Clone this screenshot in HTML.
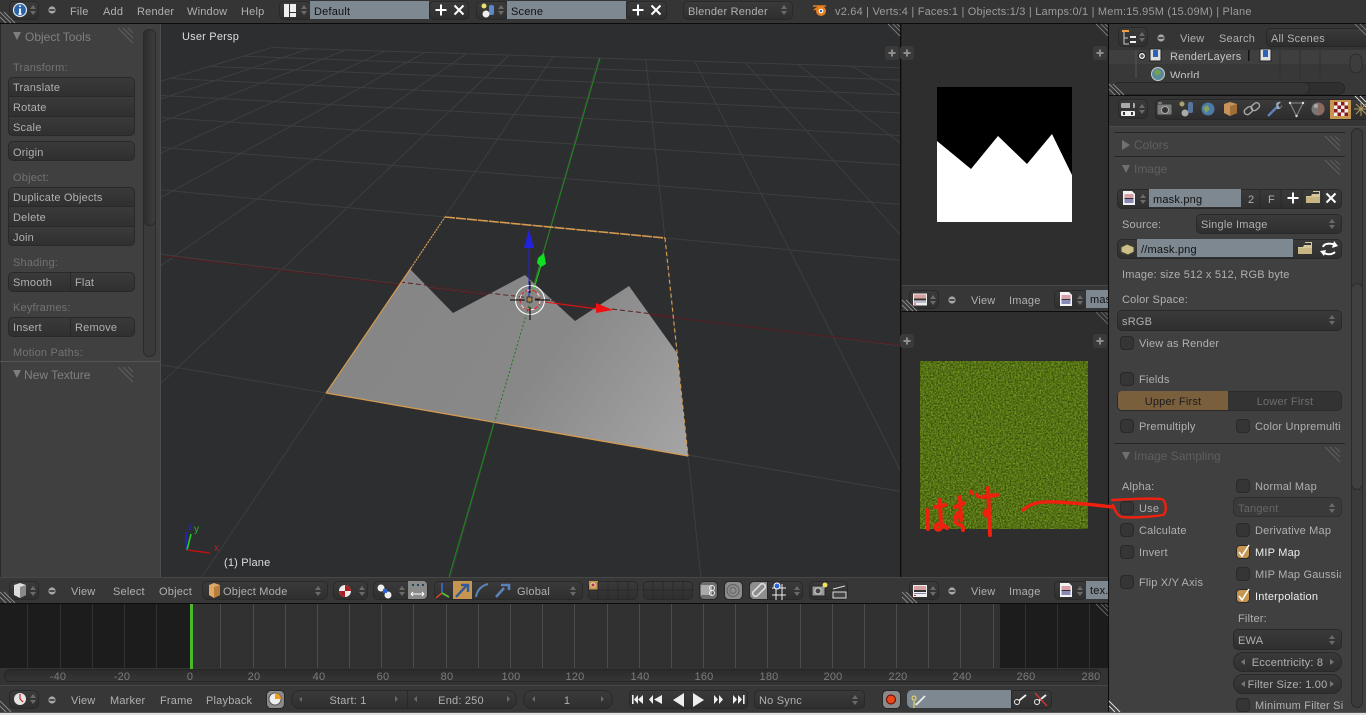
<!DOCTYPE html>
<html><head><meta charset="utf-8"><style>
html,body{margin:0;padding:0;background:#333;width:1366px;height:715px;overflow:hidden}
#r{position:relative;width:1366px;height:715px;overflow:hidden;background:#353535;font-family:"Liberation Sans",sans-serif;font-size:11px}
.b{position:absolute;box-sizing:border-box}
.t{position:absolute;white-space:nowrap;line-height:14px;font-size:11px;color:#b0b0b0;margin-top:1px;letter-spacing:.2px}
.l{color:#727272}
.h{font-size:12px;color:#808080;letter-spacing:0;margin-top:0}
.hd{color:#5f5f5f;font-size:12px;letter-spacing:0;margin-top:0}
.d{color:#666}
.w{position:absolute;box-sizing:border-box;background:linear-gradient(#3a3a3a,#2f2f2f);border:1px solid #292929;border-radius:5px}
.s{position:absolute;box-sizing:border-box;background:linear-gradient(#3a3a3a,#303030);border:1px solid #292929}
.f{position:absolute;box-sizing:border-box;background:#7e8890}
.c{position:absolute;box-sizing:border-box;width:14px;height:14px;background:#353535;border:1px solid #292929;border-radius:4px}
.ce{text-align:center}
svg{position:absolute;left:0;top:0}
</style></head><body><div id="r">

<!-- areas -->
<div class="b" style="left:0;top:0;width:1366px;height:23px;background:#353535"></div>
<div class="b" style="left:0;top:23px;width:1366px;height:1px;background:#0c0c0c"></div>
<div class="b" style="left:0;top:24px;width:160px;height:553px;background:#404040"></div>
<div class="b" style="left:0;top:24px;width:1px;height:553px;background:#2a2a2a"></div>
<div class="b" style="left:160px;top:24px;width:1px;height:553px;background:#4e4e4e"></div>
<div class="b" style="left:0;top:361px;width:160px;height:1px;background:#555"></div>
<div class="b" style="left:161px;top:24px;width:739px;height:553px;background:#2d2e30"></div>
<div class="b" style="left:900px;top:24px;width:1px;height:553px;background:#0c0c0c"></div>
<div class="b" style="left:901px;top:24px;width:1px;height:553px;background:#222"></div>
<div class="b" style="left:902px;top:24px;width:206px;height:261px;background:#2e2e2e"></div>
<div class="b" style="left:902px;top:285px;width:206px;height:27px;background:#373737;border-top:1px solid #474747"></div>
<div class="b" style="left:902px;top:311px;width:206px;height:1px;background:#0c0c0c"></div>
<div class="b" style="left:902px;top:312px;width:206px;height:265px;background:#2e2e2e"></div>
<div class="b" style="left:0;top:577px;width:1108px;height:26px;background:#373737;border-top:1px solid #474747"></div>
<div class="b" style="left:0;top:603px;width:1108px;height:1px;background:#0c0c0c"></div>
<div class="b" style="left:0;top:604px;width:1108px;height:64px;background:#313131"></div>
<div class="b" style="left:0;top:604px;width:190px;height:64px;background:#1c1c1c"></div>
<div class="b" style="left:1000px;top:604px;width:108px;height:64px;background:#1c1c1c"></div>
<div class="b" style="left:0;top:668px;width:1108px;height:17px;background:#333"></div>
<div class="b" style="left:4px;top:669px;width:1097px;height:13px;background:linear-gradient(#2b2b2b,#353535);border:1px solid #262626;border-radius:7px"></div>
<div class="b" style="left:0;top:685px;width:1108px;height:27px;background:#373737;border-top:1px solid #474747"></div>
<div class="b" style="left:1108px;top:24px;width:1px;height:688px;background:#0c0c0c"></div>
<div class="b" style="left:1109px;top:24px;width:257px;height:26px;background:#353535"></div>
<div class="b" style="left:1109px;top:50px;width:257px;height:14px;background:#3f3f3f"></div>
<div class="b" style="left:1109px;top:64px;width:257px;height:31px;background:#383838"></div>
<div class="b" style="left:1113px;top:82px;width:232px;height:13px;background:#2f2f2f;border:1px solid #262626;border-radius:7px"></div>
<div class="b" style="left:1113px;top:82px;width:197px;height:13px;background:#353535;border:1px solid #262626;border-radius:7px"></div>
<div class="b" style="left:1109px;top:95px;width:257px;height:1px;background:#0c0c0c"></div>
<div class="b" style="left:1109px;top:96px;width:257px;height:30px;background:#353535"></div>
<div class="b" style="left:1109px;top:126px;width:257px;height:586px;background:#404040;border-top:1px solid #4a4a4a"></div>
<div class="b" style="left:1114px;top:132px;width:231px;height:1px;background:#262626"></div>
<div class="b" style="left:1114px;top:156px;width:231px;height:1px;background:#262626"></div>
<div class="b" style="left:1114px;top:443px;width:231px;height:1px;background:#262626"></div>
<div class="b" style="left:1351px;top:128px;width:12px;height:580px;background:#3a3a3a;border:1px solid #2b2b2b;border-radius:6px"></div>
<div class="b" style="left:1351px;top:283px;width:12px;height:207px;background:#404040;border:1px solid #2b2b2b;border-radius:6px"></div>
<div class="b" style="left:0;top:712px;width:1366px;height:3px;background:#dfe3e6;border-top:1px solid #555"></div>
<div class="b" style="left:143px;top:29px;width:13px;height:328px;background:#3a3a3a;border:1px solid #2b2b2b;border-radius:6px"></div>
<div class="b" style="left:143px;top:29px;width:13px;height:197px;background:linear-gradient(90deg,#2d2d2d,#3d3d3d);border:1px solid #2b2b2b;border-radius:6px"></div>

<!-- images -->
<svg width="1366" height="715" viewBox="0 0 1366 715">
<defs>
<clipPath id="vp"><rect x="161" y="24" width="739" height="553"/></clipPath>
<filter id="gr" x="0" y="0" width="100%" height="100%" color-interpolation-filters="sRGB"><feTurbulence type="fractalNoise" baseFrequency="0.6" numOctaves="2" seed="4"/><feColorMatrix values=".5 0 0 0 .08  .55 0 0 0 .17  .16 0 0 0 0  0 0 0 0 1"/></filter>
<linearGradient id="pg" gradientUnits="userSpaceOnUse" x1="400" y1="260" x2="690" y2="460"><stop offset="0" stop-color="#868686"/><stop offset=".5" stop-color="#888"/><stop offset="1" stop-color="#a6a6a6"/></linearGradient>
</defs>
<g id="grid" clip-path="url(#vp)" stroke="#3e3e3e" stroke-width="1" fill="none"></g>
<g clip-path="url(#vp)">
<path d="M163 256L900 345" stroke="#561a1e" stroke-width="1" fill="none"/>
<path d="M600 58L449 577" stroke="#1e8a1e" stroke-width="1" fill="none"/>
<polygon points="326,393 410,269 453,313 525,275 575,321 629,286 677,353 688,456" fill="url(#pg)"/>
<path d="M400 282L595 306M612 309L677 317" stroke="#5a2024" stroke-width="1" stroke-dasharray="5 3" fill="none"/>
<path d="M530 302L449 577" stroke="#1c7a1c" stroke-width="1" stroke-dasharray="2 2" fill="none"/>
<path d="M445 217L665 238" stroke="#d49a50" stroke-width="1.6" stroke-dasharray="10 1" fill="none"/>
<path d="M665 238L688 456" stroke="#d49a50" stroke-width="1.2" stroke-dasharray="4 3" fill="none"/>
<path d="M688 456L326 393" stroke="#d49a50" stroke-width="1.3" fill="none"/>
<path d="M326 393L411 268" stroke="#d49a50" stroke-width="1.2" fill="none"/>
<path d="M411 268L445 217" stroke="#d49a50" stroke-width="1.2" stroke-dasharray="2 1" fill="none"/>
<path d="M529 248V300" stroke="#2222cc" stroke-width="1"/>
<polygon points="529,229 534,248 524,248" fill="#2222dd"/>
<path d="M533 292L541 265" stroke="#22cc22" stroke-width="1"/>
<polygon points="544,253 546,264 541,267 537,263 538,258" fill="#11dd22"/>
<path d="M545 302L597 309" stroke="#ee1111" stroke-width="1"/>
<polygon points="613,310 596,303 596,313" fill="#ee1111"/>
<circle cx="530" cy="300" r="14.5" fill="none" stroke="#fff" stroke-width="1.1"/>
<circle cx="530" cy="300" r="10" fill="none" stroke="#e22" stroke-width="1.1" stroke-dasharray="5 2"/>
<circle cx="530" cy="300" r="10" fill="none" stroke="#fff" stroke-width="1.1" stroke-dasharray="4 7" opacity=".8"/>
<path d="M510 300H525M535 300H550M530 281V293M530 307V320" stroke="#000" stroke-width="1"/>
<rect x="527" y="297" width="5" height="5" fill="#a8854a" stroke="#222" stroke-width=".8"/>
<path d="M186 550V532" stroke="#2222cc" stroke-width="1.6"/>
<path d="M187 550L191 534" stroke="#22cc22" stroke-width="1.6"/>
<path d="M187 550L210 553" stroke="#bb1111" stroke-width="1.6"/>
</g>
<!-- mask -->
<rect x="937" y="87" width="135" height="135" fill="#000"/>
<polygon points="937,141 971,169 998,136 1027,164 1052,134 1072,175 1072,222 937,222" fill="#fff"/>
<!-- grass -->
<rect x="920" y="361" width="168" height="168" fill="#4f7a1c"/>
<rect x="920" y="361" width="168" height="168" filter="url(#gr)"/>
</svg>

<!-- TOP HEADER -->
<div class="w" style="left:9px;top:1px;width:30px;height:19px"></div>
<span class="t" style="left:70px;top:4px">File</span>
<span class="t" style="left:103px;top:4px">Add</span>
<span class="t" style="left:137px;top:4px">Render</span>
<span class="t" style="left:187px;top:4px">Window</span>
<span class="t" style="left:241px;top:4px">Help</span>
<div class="w" style="left:279px;top:1px;width:32px;height:19px"></div>
<div class="f" style="left:310px;top:1px;width:119px;height:18px"></div>
<span class="t" style="left:314px;top:4px;color:#111">Default</span>
<div class="w" style="left:429px;top:1px;width:40px;height:19px"></div>
<div class="w" style="left:476px;top:1px;width:32px;height:19px"></div>
<div class="f" style="left:507px;top:1px;width:119px;height:18px"></div>
<span class="t" style="left:511px;top:4px;color:#111">Scene</span>
<div class="w" style="left:626px;top:1px;width:41px;height:19px"></div>
<div class="w" style="left:683px;top:1px;width:110px;height:19px"></div>
<span class="t" style="left:688px;top:4px">Blender Render</span>
<span class="t" style="left:835px;top:4px;color:#9c9c9c">v2.64 | Verts:4 | Faces:1 | Objects:1/3 | Lamps:0/1 | Mem:15.95M (15.09M) | Plane</span>

<!-- LEFT PANEL -->
<span class="t h" style="left:25px;top:30px">Object Tools</span>
<span class="t l" style="left:13px;top:60px">Transform:</span>
<div class="s" style="left:8px;top:77px;width:127px;height:20px;border-radius:5px 5px 0 0"></div>
<div class="s" style="left:8px;top:96px;width:127px;height:21px"></div>
<div class="s" style="left:8px;top:116px;width:127px;height:20px;border-radius:0 0 5px 5px"></div>
<span class="t" style="left:13px;top:80px">Translate</span>
<span class="t" style="left:13px;top:100px">Rotate</span>
<span class="t" style="left:13px;top:120px">Scale</span>
<div class="w" style="left:8px;top:141px;width:127px;height:20px"></div>
<span class="t" style="left:13px;top:145px">Origin</span>
<span class="t l" style="left:13px;top:170px">Object:</span>
<div class="s" style="left:8px;top:187px;width:127px;height:20px;border-radius:5px 5px 0 0"></div>
<div class="s" style="left:8px;top:206px;width:127px;height:21px"></div>
<div class="s" style="left:8px;top:226px;width:127px;height:20px;border-radius:0 0 5px 5px"></div>
<span class="t" style="left:13px;top:190px">Duplicate Objects</span>
<span class="t" style="left:13px;top:210px">Delete</span>
<span class="t" style="left:13px;top:230px">Join</span>
<span class="t l" style="left:13px;top:255px">Shading:</span>
<div class="s" style="left:8px;top:272px;width:63px;height:20px;border-radius:5px 0 0 5px"></div>
<div class="s" style="left:70px;top:272px;width:65px;height:20px;border-radius:0 5px 5px 0"></div>
<span class="t" style="left:13px;top:275px">Smooth</span>
<span class="t" style="left:75px;top:275px">Flat</span>
<span class="t l" style="left:13px;top:300px">Keyframes:</span>
<div class="s" style="left:8px;top:317px;width:63px;height:20px;border-radius:5px 0 0 5px"></div>
<div class="s" style="left:70px;top:317px;width:65px;height:20px;border-radius:0 5px 5px 0"></div>
<span class="t" style="left:13px;top:320px">Insert</span>
<span class="t" style="left:75px;top:320px">Remove</span>
<span class="t l" style="left:13px;top:345px">Motion Paths:</span>
<span class="t h" style="left:24px;top:368px">New Texture</span>

<!-- VIEWPORT TEXT -->
<span class="t" style="left:182px;top:29px;color:#ddd">User Persp</span>
<span class="t" style="left:224px;top:555px;color:#ddd">(1) Plane</span>
<span class="t" style="left:188px;top:520px;color:#2222cc;font-size:10px">z</span>
<span class="t" style="left:194px;top:522px;color:#22bb22;font-size:10px">y</span>
<span class="t" style="left:214px;top:541px;color:#bb2222;font-size:10px">x</span>

<!-- IMAGE EDITOR HEADERS -->
<div class="w" style="left:909px;top:290px;width:30px;height:19px"></div>
<span class="t" style="left:971px;top:293px">View</span>
<span class="t" style="left:1009px;top:293px">Image</span>
<div class="w" style="left:1054px;top:290px;width:33px;height:19px"></div>
<div class="f" style="left:1086px;top:290px;width:22px;height:18px;overflow:hidden"><span class="t" style="left:4px;top:2px;color:#111">mask.png</span></div>
<div class="w" style="left:909px;top:581px;width:30px;height:19px"></div>
<span class="t" style="left:971px;top:584px">View</span>
<span class="t" style="left:1009px;top:584px">Image</span>
<div class="w" style="left:1054px;top:581px;width:33px;height:19px"></div>
<div class="f" style="left:1086px;top:581px;width:22px;height:18px;overflow:hidden"><span class="t" style="left:4px;top:2px;color:#111">tex.png</span></div>

<!-- VIEWPORT HEADER -->
<div class="w" style="left:9px;top:581px;width:30px;height:19px"></div>
<span class="t" style="left:71px;top:584px">View</span>
<span class="t" style="left:113px;top:584px">Select</span>
<span class="t" style="left:159px;top:584px">Object</span>
<div class="w" style="left:202px;top:581px;width:126px;height:19px"></div>
<span class="t" style="left:223px;top:584px">Object Mode</span>
<div class="w" style="left:333px;top:581px;width:35px;height:19px"></div>
<div class="w" style="left:373px;top:581px;width:55px;height:19px"></div>
<div class="b" style="left:408px;top:581px;width:19px;height:18px;background:#8a8a8a;border-radius:0 4px 4px 0"></div>
<div class="w" style="left:434px;top:581px;width:149px;height:19px"></div>
<div class="b" style="left:453px;top:581px;width:19px;height:18px;background:#c6954f"></div>
<span class="t" style="left:517px;top:584px">Global</span>
<div class="w" style="left:588px;top:581px;width:50px;height:19px"></div>
<div class="w" style="left:643px;top:581px;width:50px;height:19px"></div>
<div class="b" style="left:589px;top:581px;width:9px;height:9px;background:#c6954f"></div>
<div class="b" style="left:699px;top:581px;width:19px;height:19px;background:#6d6d6d;border:1px solid #262626;border-radius:5px"></div>
<div class="b" style="left:724px;top:581px;width:19px;height:19px;background:#8d8d8d;border:1px solid #262626;border-radius:5px"></div>
<div class="w" style="left:749px;top:581px;width:54px;height:19px"></div>
<div class="b" style="left:749px;top:581px;width:19px;height:19px;background:#8d8d8d;border:1px solid #262626;border-radius:5px 0 0 5px"></div>
<div class="w" style="left:809px;top:581px;width:39px;height:19px"></div>

<!-- TIMELINE LABELS -->
<span class="t ce" style="left:38px;top:669px;width:40px;color:#7c7c7c">-40</span>
<span class="t ce" style="left:102px;top:669px;width:40px;color:#7c7c7c">-20</span>
<span class="t ce" style="left:170px;top:669px;width:40px;color:#7c7c7c">0</span>
<span class="t ce" style="left:234px;top:669px;width:40px;color:#7c7c7c">20</span>
<span class="t ce" style="left:299px;top:669px;width:40px;color:#7c7c7c">40</span>
<span class="t ce" style="left:363px;top:669px;width:40px;color:#7c7c7c">60</span>
<span class="t ce" style="left:427px;top:669px;width:40px;color:#7c7c7c">80</span>
<span class="t ce" style="left:491px;top:669px;width:40px;color:#7c7c7c">100</span>
<span class="t ce" style="left:555px;top:669px;width:40px;color:#7c7c7c">120</span>
<span class="t ce" style="left:620px;top:669px;width:40px;color:#7c7c7c">140</span>
<span class="t ce" style="left:684px;top:669px;width:40px;color:#7c7c7c">160</span>
<span class="t ce" style="left:749px;top:669px;width:40px;color:#7c7c7c">180</span>
<span class="t ce" style="left:813px;top:669px;width:40px;color:#7c7c7c">200</span>
<span class="t ce" style="left:878px;top:669px;width:40px;color:#7c7c7c">220</span>
<span class="t ce" style="left:942px;top:669px;width:40px;color:#7c7c7c">240</span>
<span class="t ce" style="left:1006px;top:669px;width:40px;color:#7c7c7c">260</span>
<span class="t ce" style="left:1071px;top:669px;width:40px;color:#7c7c7c">280</span>

<!-- BOTTOM HEADER -->
<div class="w" style="left:9px;top:690px;width:30px;height:19px"></div>
<span class="t" style="left:71px;top:693px">View</span>
<span class="t" style="left:110px;top:693px">Marker</span>
<span class="t" style="left:160px;top:693px">Frame</span>
<span class="t" style="left:206px;top:693px">Playback</span>
<div class="b" style="left:266px;top:690px;width:19px;height:19px;background:#8a8a8a;border:1px solid #262626;border-radius:5px"></div>
<div class="w" style="left:291px;top:690px;width:117px;height:19px;border-radius:9px 0 0 9px"></div>
<div class="w" style="left:407px;top:690px;width:110px;height:19px;border-radius:0 9px 9px 0"></div>
<span class="t ce" style="left:300px;top:693px;width:96px">Start: 1</span>
<span class="t ce" style="left:413px;top:693px;width:96px">End: 250</span>
<div class="w" style="left:523px;top:690px;width:90px;height:19px;border-radius:9px"></div>
<span class="t ce" style="left:530px;top:693px;width:74px">1</span>
<div class="w" style="left:629px;top:690px;width:119px;height:19px"></div>
<div class="w" style="left:754px;top:690px;width:111px;height:19px"></div>
<span class="t" style="left:759px;top:693px">No Sync</span>
<div class="b" style="left:882px;top:690px;width:19px;height:19px;background:#8a8a8a;border:1px solid #262626;border-radius:5px"></div>
<div class="f" style="left:907px;top:690px;width:104px;height:18px;border-radius:5px 0 0 5px"></div>
<div class="w" style="left:1011px;top:690px;width:41px;height:19px;border-radius:0 5px 5px 0"></div>

<!-- OUTLINER -->
<div class="w" style="left:1118px;top:27px;width:30px;height:20px"></div>
<span class="t" style="left:1180px;top:31px">View</span>
<span class="t" style="left:1219px;top:31px">Search</span>
<div class="b" style="left:1266px;top:28px;width:100px;height:19px;background:linear-gradient(#3a3a3a,#2d2d2d);border:1px solid #272727;border-right:0;border-radius:5px 0 0 5px"></div>
<span class="t" style="left:1271px;top:31px">All Scenes</span>
<span class="t" style="left:1170px;top:49px;color:#c4c4c4">RenderLayers</span>
<div class="b" style="left:1109px;top:64px;width:257px;height:14px;overflow:hidden"><span class="t" style="left:61px;top:4px;color:#c4c4c4">World</span></div>

<!-- PROPERTIES HEADER -->
<div class="w" style="left:1118px;top:99px;width:30px;height:20px"></div>
<div class="b" style="left:1155px;top:99px;width:211px;height:21px;background:linear-gradient(#3a3a3a,#2d2d2d);border:1px solid #272727;border-right:0;border-radius:5px 0 0 5px"></div>
<div class="b" style="left:1330px;top:100px;width:21px;height:19px;background:#c6954f"></div>

<!-- PROPERTIES -->
<span class="t hd" style="left:1134px;top:138px">Colors</span>
<span class="t hd" style="left:1134px;top:162px">Image</span>
<div class="w" style="left:1117px;top:189px;width:225px;height:20px"></div>
<div class="f" style="left:1149px;top:189px;width:92px;height:18px"></div>
<span class="t" style="left:1153px;top:192px;color:#111">mask.png</span>
<span class="t" style="left:1248px;top:192px">2</span>
<span class="t" style="left:1268px;top:192px">F</span>
<span class="t" style="left:1122px;top:217px">Source:</span>
<div class="w" style="left:1196px;top:214px;width:146px;height:20px"></div>
<span class="t" style="left:1201px;top:217px">Single Image</span>
<div class="w" style="left:1117px;top:239px;width:225px;height:20px"></div>
<div class="f" style="left:1137px;top:239px;width:156px;height:18px"></div>
<span class="t" style="left:1141px;top:242px;color:#111">//mask.png</span>
<span class="t" style="left:1122px;top:267px">Image: size 512 x 512, RGB byte</span>
<span class="t" style="left:1122px;top:292px">Color Space:</span>
<div class="w" style="left:1117px;top:310px;width:225px;height:21px"></div>
<span class="t" style="left:1122px;top:314px">sRGB</span>
<div class="c" style="left:1120px;top:336px"></div>
<span class="t" style="left:1139px;top:336px">View as Render</span>
<div class="c" style="left:1120px;top:372px"></div>
<span class="t" style="left:1139px;top:372px">Fields</span>
<div class="b" style="left:1117px;top:391px;width:225px;height:20px;background:#333;border:1px solid #2b2b2b;border-radius:5px"></div>
<div class="b" style="left:1118px;top:391px;width:110px;height:19px;background:#7a5f3c;border-radius:4px 0 0 4px"></div>
<span class="t ce" style="left:1118px;top:394px;width:110px;color:#1c1c1c">Upper First</span>
<span class="t ce" style="left:1230px;top:394px;width:110px;color:#6e6e6e">Lower First</span>
<div class="c" style="left:1120px;top:419px"></div>
<span class="t" style="left:1139px;top:419px">Premultiply</span>
<div class="c" style="left:1236px;top:419px"></div>
<span class="t" style="left:1255px;top:419px;width:85px;overflow:hidden">Color Unpremultiply</span>
<span class="t hd" style="left:1134px;top:449px">Image Sampling</span>
<span class="t" style="left:1122px;top:479px">Alpha:</span>
<div class="c" style="left:1120px;top:501px"></div>
<span class="t" style="left:1139px;top:501px">Use</span>
<div class="c" style="left:1120px;top:523px"></div>
<span class="t" style="left:1139px;top:523px">Calculate</span>
<div class="c" style="left:1120px;top:545px"></div>
<span class="t" style="left:1139px;top:545px">Invert</span>
<div class="c" style="left:1120px;top:575px"></div>
<span class="t" style="left:1139px;top:575px">Flip X/Y Axis</span>
<div class="c" style="left:1236px;top:479px"></div>
<span class="t" style="left:1255px;top:479px">Normal Map</span>
<div class="b" style="left:1233px;top:497px;width:109px;height:20px;background:#3a3a3a;border:1px solid #303030;border-radius:5px"></div>
<span class="t d" style="left:1238px;top:501px">Tangent</span>
<div class="c" style="left:1236px;top:523px"></div>
<span class="t" style="left:1255px;top:523px">Derivative Map</span>
<div class="c" style="left:1236px;top:545px;background:#c6954f"></div>
<span class="t" style="left:1255px;top:545px;color:#eee">MIP Map</span>
<div class="c" style="left:1236px;top:567px"></div>
<span class="t" style="left:1255px;top:567px;width:86px;overflow:hidden">MIP Map Gaussian</span>
<div class="c" style="left:1236px;top:589px;background:#c6954f"></div>
<span class="t" style="left:1255px;top:589px;color:#eee">Interpolation</span>
<span class="t" style="left:1238px;top:611px">Filter:</span>
<div class="w" style="left:1233px;top:629px;width:109px;height:21px"></div>
<span class="t" style="left:1238px;top:633px">EWA</span>
<div class="w" style="left:1233px;top:652px;width:109px;height:20px;border-radius:10px"></div>
<span class="t ce" style="left:1233px;top:655px;width:109px">Eccentricity: 8</span>
<div class="w" style="left:1233px;top:674px;width:109px;height:20px;border-radius:10px"></div>
<span class="t ce" style="left:1233px;top:677px;width:109px">Filter Size: 1.00</span>
<div class="c" style="left:1236px;top:698px"></div>
<span class="t" style="left:1255px;top:698px;width:88px;overflow:hidden">Minimum Filter Size</span>

<!-- ICON OVERLAY -->
<svg width="1366" height="715" viewBox="0 0 1366 715">
<defs>
<g id="ud"><polygon points="-3,-1 0,-5 3,-1" fill="#6a6a6a"/><polygon points="-3,1 0,5 3,1" fill="#6a6a6a"/></g>
<g id="mn"><circle r="3.6" fill="#a8a8a8"/><rect x="-2.6" y="-.8" width="5.2" height="1.6" fill="#333"/></g>
<g id="ht" stroke="#5e5e5e" stroke-width="1" fill="none"><path d="M0 0L15 15M5 0L15 10M10 0L15 5"/></g>
<g id="pl"><rect x="-7" y="-7" width="14" height="14" rx="3" fill="#3a3a3a"/><path d="M-3.5 0H3.5M0 -3.5V3.5" stroke="#8e8e8e" stroke-width="2"/></g>
<g id="ie"><rect x="-7" y="-6" width="14" height="12" fill="#eee"/><rect x="-6" y="-5" width="12" height="4" fill="#d9a0a0"/><rect x="-6" y="-1" width="12" height="2" fill="#333"/><rect x="-6" y="2" width="12" height="1" fill="#8a8ab0"/><rect x="-6" y="4" width="2" height="1" fill="#d22"/></g>
<g id="di"><path d="M-6 -7H3L6 -4V7H-6Z" fill="#f2f2f2"/><rect x="-4.5" y="-4" width="9" height="4" fill="#d8a0a8"/><rect x="-4.5" y="0" width="9" height="1" fill="#333"/><rect x="-4.5" y="1" width="9" height="4" fill="#8a8ab8"/></g>
<g id="fo"><path d="M-7 -2H-2L-1 -4H6V-6H0V-7H7V5H-7Z" fill="#d6c89a"/><rect x="-7" y="-1" width="14" height="6" fill="#c8b682"/></g>
<g id="xx"><path d="M-4.5 -4.5L4.5 4.5M4.5 -4.5L-4.5 4.5" stroke="#fff" stroke-width="2"/></g>
<g id="pp"><path d="M-5.5 0H5.5M0 -5.5V5.5" stroke="#fff" stroke-width="2"/></g>
</defs>

<!-- hatches -->
<use href="#ht" x="118" y="28"/><use href="#ht" x="118" y="367"/>
<use href="#ht" x="1325" y="136"/><use href="#ht" x="1325" y="160"/><use href="#ht" x="1325" y="447"/>
<path d="M0 12L11 23M0 17L6 23M4 12L15 23" stroke="#8a8a8a"/>
<path d="M888 24L900 36M893 24L900 31M897 24L900 27" stroke="#777"/>
<path d="M1096 24L1108 36M1101 24L1108 31M1105 24L1108 27" stroke="#777"/>
<path d="M1096 312L1108 324M1101 312L1108 319M1105 312L1108 315" stroke="#666"/>
<path d="M1096 604L1108 616M1101 604L1108 611M1105 604L1108 607" stroke="#666"/>
<path d="M0 300L11 311M0 305L6 311M4 300L15 311" transform="translate(902 0)" stroke="#8a8a8a"/>
<path d="M0 592L11 603M0 597L6 603M4 592L15 603" stroke="#8a8a8a"/>
<path d="M0 592L11 603M0 597L6 603M4 592L15 603" transform="translate(902 0)" stroke="#8a8a8a"/>
<path d="M0 701L11 712M0 706L6 712" stroke="#8a8a8a"/>
<path d="M1109 84L1120 95M1109 89L1115 95M1113 84L1124 95" stroke="#8a8a8a"/>
<path d="M1109 701L1120 712M1109 706L1115 712" stroke="#ddd"/>
<path d="M1355 24L1366 35M1360 24L1366 30" stroke="#777"/>
<path d="M1355 96L1366 107M1360 96L1366 102" stroke="#ddd"/>

<use href="#pl" x="892" y="53"/><use href="#pl" x="907" y="53"/><use href="#pl" x="1100" y="53"/><use href="#pl" x="907" y="341"/><use href="#pl" x="1100" y="341"/>

<!-- top header -->
<circle cx="20" cy="10" r="6.5" fill="#2a62a8" stroke="#dfe6ee" stroke-width="1.2"/><path d="M20 5.5V7M20 8.5V14M18.5 14H21.5" stroke="#fff" stroke-width="1.8"/>
<use href="#ud" x="33" y="10"/><use href="#mn" x="52" y="10"/>
<rect x="284" y="4" width="5" height="13" fill="#eee"/><rect x="290" y="4" width="6" height="8" fill="#eee"/><rect x="290" y="13" width="6" height="4" fill="#eee"/>
<use href="#ud" x="304" y="10"/>
<use href="#pp" x="441" y="10"/><use href="#xx" x="459" y="10"/>
<circle cx="484" cy="6" r="2.5" fill="#e8e070"/><rect x="489" y="5" width="5" height="10" rx="2" fill="#5a88c8"/><circle cx="486" cy="14" r="3.5" fill="#eee"/>
<use href="#ud" x="501" y="10"/>
<use href="#pp" x="638" y="10"/><use href="#xx" x="656" y="10"/>
<use href="#ud" x="784" y="10"/>
<path d="M814 10L820 6H813M820 6L826 6" stroke="#e88020" stroke-width="1.6" fill="none"/><circle cx="821" cy="11" r="5" fill="#e88020"/><circle cx="821" cy="11" r="2.3" fill="#fff"/><circle cx="821" cy="11" r="1.2" fill="#2a62a8"/>

<!-- image editor headers -->
<use href="#ie" x="920" y="299.500"/><use href="#ud" x="933" y="300"/><use href="#mn" x="952" y="300"/><use href="#di" x="1066" y="299"/><use href="#ud" x="1080" y="300"/>
<use href="#ie" x="920" y="591"/><use href="#ud" x="933" y="591"/><use href="#mn" x="952" y="591"/><use href="#di" x="1066" y="590"/><use href="#ud" x="1080" y="591"/>

<!-- viewport header -->
<path d="M14 585L20 583L26 585V595L20 598L14 595Z" fill="#ddd"/><path d="M20 587V598L26 595V585Z" fill="#888"/>
<use href="#ud" x="33" y="591"/><use href="#mn" x="52" y="591"/>
<path d="M209 585L214 583L220 585V595L214 598L209 595Z" fill="#e0a868"/><path d="M214 587V598L220 595V585Z" fill="#b87c3c"/>
<use href="#ud" x="318" y="591"/>
<circle cx="345" cy="591" r="6" fill="#eee"/><path d="M345 585A6 6 0 0 1 351 591H345ZM345 591V597A6 6 0 0 1 339 591Z" fill="#a82020"/>
<use href="#ud" x="362" y="591"/>
<circle cx="381" cy="588" r="3.5" fill="#eee"/><circle cx="388" cy="595" r="3.5" fill="#eee"/><rect x="383" y="589" width="4" height="4" fill="#2a62d8"/>
<use href="#ud" x="402" y="591"/>
<path d="M411 594H424M411 594L413 592M411 594L413 596M424 594L422 592M424 594L422 596" stroke="#fff" fill="none"/><path d="M412 584h2v2h-2zM417 584h2v2h-2zM422 584h2v2h-2z" fill="#245"/>
<path d="M442 593V583" stroke="#3a6ad0" stroke-width="1.6"/><path d="M442 593L436 598" stroke="#d04030" stroke-width="1.6"/><path d="M442 593L449 597" stroke="#60c030" stroke-width="1.6"/>
<path d="M456 597L467 585M461 585H468V592" stroke="#2f5a9c" stroke-width="2.4" fill="none"/>
<path d="M476 597C477 590 481 586 488 584" stroke="#5a82b8" stroke-width="2" fill="none"/>
<path d="M496 597L504 588M501 585H509V590" stroke="#5a82b8" stroke-width="2.6" fill="none"/>
<use href="#ud" x="573" y="591"/>
<path d="M598 582V599M608 582V599M618 582V599M628 582V599M589 590H637M653 582V599M663 582V599M673 582V599M683 582V599M644 590H692" stroke="#2a2a2a" fill="none"/>
<circle cx="593" cy="585" r="2" fill="#a33" stroke="#fff" stroke-width=".7"/>
<rect x="701" y="585" width="11" height="10" fill="#aaa"/><circle cx="712" cy="588" r="2.5" fill="none" stroke="#eee"/><circle cx="712" cy="593" r="2.5" fill="none" stroke="#eee"/>
<circle cx="733" cy="590.500" r="6" fill="none" stroke="#666" stroke-width="1.2"/><circle cx="733" cy="590.500" r="3" fill="none" stroke="#666"/>
<path d="M753 592L761 584A3 3 0 0 1 765 588L757 596A3 3 0 0 1 753 592Z" fill="none" stroke="#ddd" stroke-width="1.6"/>
<path d="M772 588H786M772 595H786M776 584V600M782 584V600" stroke="#eee"/><circle cx="777" cy="586" r="3" fill="#2a62d8" stroke="#fff"/>
<use href="#ud" x="797" y="591"/>
<rect x="812" y="586" width="13" height="10" fill="#999" stroke="#222"/><circle cx="818" cy="591" r="3" fill="#444" stroke="#ccc"/><circle cx="825" cy="585" r="2.500" fill="#f0e060"/>
<path d="M833 589L845 586M833 592H846V598H833Z" fill="#444" stroke="#ddd"/>

<!-- timeline -->
<g id="ticks" stroke="#4c4c4c" stroke-width="1"></g>
<rect x="190" y="604" width="3" height="65" fill="#4ab828"/>

<!-- bottom header -->
<circle cx="20" cy="699" r="6" fill="#e4e4e4"/><path d="M20 699V694M20 699L23 702" stroke="#c22" stroke-width="1.2"/>
<use href="#ud" x="33" y="699"/><use href="#mn" x="52" y="700"/>
<circle cx="275" cy="699" r="6" fill="#eee" stroke="#555"/><path d="M275 699V693A6 6 0 0 1 281 699Z" fill="#f09a20"/>
<polygon points="302,697 299,699 302,702" fill="#6a6a6a"/><polygon points="395,696 398,699 395,702" fill="#6a6a6a"/>
<polygon points="417,696 414,699 417,702" fill="#6a6a6a"/><polygon points="507,696 510,699 507,702" fill="#6a6a6a"/>
<polygon points="535,696 532,699 535,702" fill="#6a6a6a"/><polygon points="601,696 604,699 601,702" fill="#6a6a6a"/>
<g fill="#eee">
<rect x="632" y="695" width="1.600" height="9"/><polygon points="638,695 634,699.500 638,704"/><polygon points="643,695 638,699.500 643,704"/>
<polygon points="653,695 649,699.500 653,704"/><polygon points="662,695 654,699.500 662,704"/>
<polygon points="684,693 673,700 684,707"/>
<polygon points="693,693 704,700 693,707"/>
<polygon points="714,695 718,699.500 714,704"/><polygon points="719,695 723,699.500 719,704"/>
<polygon points="733,695 737,699.500 733,704"/><polygon points="738,695 742,699.500 738,704"/><rect x="743" y="695" width="1.600" height="9"/>
</g>
<use href="#ud" x="855" y="700"/>
<circle cx="891" cy="699.500" r="4.500" fill="#e84818" stroke="#600"/>
<path d="M914 696a2 2 0 1 0 .1 0M914 700V708M914 704H917" stroke="#e0d070" stroke-width="1.2" fill="none"/><path d="M916 705L925 696" stroke="#eee" stroke-width="1.6"/>
<path d="M1016 703L1026 695" stroke="#eee" stroke-width="1.800"/><circle cx="1017" cy="702" r="2.500" fill="#333" stroke="#eee"/>
<path d="M1036 703L1046 695" stroke="#eee" stroke-width="1.800"/><circle cx="1037" cy="702" r="2.500" fill="#333" stroke="#eee"/><path d="M1035 693L1047 706" stroke="#e33" stroke-width="1.200"/>

<!-- outliner -->
<rect x="1122" y="30" width="7" height="2" fill="#f0a040"/><path d="M1124 32V44H1129M1124 38H1128" stroke="#ccc" fill="none"/><path d="M1130 36h6v2h-6zM1130 41h6v2h-6z" fill="#eee"/>
<use href="#ud" x="1142" y="37"/><use href="#mn" x="1161" y="38"/>
<path d="M1136 50V78" stroke="#555"/>
<circle cx="1142" cy="56" r="3.500" fill="#eee" stroke="#222"/><path d="M1140 56H1144M1142 54V58" stroke="#222"/>
<rect x="1150" y="49" width="11" height="12" fill="#ddd" stroke="#222"/><rect x="1153" y="50" width="5" height="7" fill="#2a62b8"/>
<rect x="1248" y="50" width="1.500" height="11" fill="#111"/>
<rect x="1260" y="49" width="11" height="12" fill="#ddd" stroke="#222"/><rect x="1263" y="50" width="5" height="7" fill="#2a62b8"/>
<path d="M1280 50V78M1300 50V78M1320 50V78" stroke="#303030"/>
<rect x="1350" y="54" width="12" height="19" rx="6" fill="#3d3d3d" stroke="#2b2b2b"/>
<circle cx="1158" cy="74" r="6.500" fill="#5a8a9a" stroke="#ccc"/><path d="M1154 72L1158 69L1161 73L1157 76Z" fill="#7ba050"/>

<!-- properties header -->
<rect x="1121" y="103" width="14" height="5" rx="1" fill="#aaa"/><rect x="1121" y="111" width="14" height="5" rx="1" fill="#eee"/><rect x="1130" y="103" width="3" height="5" fill="#333"/><rect x="1123" y="112" width="2" height="3" fill="#333"/><rect x="1131" y="112" width="2" height="3" fill="#333"/>
<use href="#ud" x="1142" y="109"/>
<rect x="1157" y="104" width="15" height="11" rx="1" fill="#7c7c7c" stroke="#333"/><circle cx="1165" cy="110" r="3.500" fill="#333" stroke="#aaa"/><rect x="1158" y="102" width="4" height="2" fill="#777"/>
<circle cx="1182" cy="104" r="2.500" fill="#a8a468"/><rect x="1188" y="102" width="5" height="11" rx="2" fill="#55749e"/><circle cx="1185" cy="113" r="3.500" fill="#aaa"/>
<circle cx="1208" cy="109" r="6.500" fill="#4a7aa8"/><path d="M1203 108L1207 105L1210 109L1206 113Z" fill="#85a060"/>
<path d="M1224 104L1230 102L1237 104V113L1230 116L1224 113Z" fill="#c8935a"/><path d="M1230 106V116L1237 113V104Z" fill="#a06e38"/>
<rect x="1244" y="108" width="9" height="6" rx="3" fill="none" stroke="#a8a8a8" stroke-width="1.400" transform="rotate(-40 1248 111)"/><rect x="1251" y="104" width="9" height="6" rx="3" fill="none" stroke="#a8a8a8" stroke-width="1.400" transform="rotate(-40 1255 107)"/>
<path d="M1268 116L1278 106" stroke="#5f82b8" stroke-width="2.400"/><path d="M1276 104A4 4 0 0 1 1281 102L1278 105L1280 108L1282 105A4 4 0 0 1 1277 109" fill="#9ab"/>
<path d="M1290 103H1303L1296.500 116Z" fill="none" stroke="#888" stroke-width="1"/><circle cx="1290" cy="103" r="1.200" fill="#ddd"/><circle cx="1303" cy="103" r="1.200" fill="#ddd"/><circle cx="1296.500" cy="116" r="1.200" fill="#ddd"/>
<circle cx="1318" cy="109" r="6.500" fill="#777"/><path d="M1318 102.500A6.500 6.500 0 0 1 1318 115.500Z" fill="#8a6a60"/><circle cx="1316" cy="106" r="2" fill="#aaa"/>
<rect x="1334" y="102" width="14" height="14" fill="#eee"/>
<path d="M1334 102h3.500v3.500h-3.500zM1341 102h3.500v3.500h-3.500zM1337.500 105.500h3.500v3.500h-3.500zM1344.500 105.500h3.500v3.500h-3.500zM1334 109h3.500v3.500h-3.500zM1341 109h3.500v3.500h-3.500zM1337.500 112.500h3.500v3.500h-3.500zM1344.500 112.500h3.500v3.500h-3.500z" fill="#8c1c1c"/>
<path d="M1361 102V116M1354 109H1366M1356 104L1366 114M1366 104L1356 114" stroke="#b09860" stroke-width="1"/>

<!-- property icons -->
<polygon points="1122,140 1130,145 1122,150" fill="#707070"/>
<polygon points="1122,165 1130,165 1126,173" fill="#707070"/>
<polygon points="1122,452 1130,452 1126,460" fill="#707070"/>
<polygon points="13,32 21,32 17,40" fill="#7e7e7e"/>
<polygon points="13,370 21,370 17,378" fill="#7e7e7e"/>
<use href="#di" x="1129" y="198"/><use href="#ud" x="1143" y="199"/>
<use href="#pp" x="1293" y="198"/><use href="#fo" x="1313" y="198"/><use href="#xx" x="1331" y="198"/>
<path d="M1260 189V208M1281 189V208M1302 189V208M1322 189V208" stroke="#2a2a2a"/>
<use href="#ud" x="1332" y="224"/>
<path d="M1121 247L1127 244L1134 247V252L1128 255L1121 252Z" fill="#cdbf8a" stroke="#443"/>
<use href="#fo" x="1305" y="249"/>
<path d="M1323 247C1324 243 1331 243 1335 245M1335 252C1332 255 1326 255 1323 252" stroke="#fff" stroke-width="2" fill="none"/><polygon points="1334,241 1338,246 1332,248" fill="#fff"/><polygon points="1324,256 1320,251 1326,250" fill="#fff"/>
<use href="#ud" x="1332" y="320"/>
<use href="#ud" x="1332" y="508"/><use href="#ud" x="1332" y="640"/>
<polygon points="1245,659 1241,662 1245,665" fill="#777"/><polygon points="1330,659 1334,662 1330,665" fill="#777"/>
<polygon points="1245,681 1241,684 1245,687" fill="#777"/><polygon points="1330,681 1334,684 1330,687" fill="#777"/>
<path d="M1239 552L1242 556L1249 545" stroke="#fff" stroke-width="1.600" fill="none"/>
<path d="M1239 596L1242 600L1249 589" stroke="#fff" stroke-width="1.600" fill="none"/>

<!-- red annotations -->
<g fill="none" stroke="#f0200e" stroke-width="4" stroke-linecap="round" stroke-linejoin="round">
<path d="M1023 510C1031 503 1040 501 1056 502C1080 503 1095 505 1113 507" stroke-width="3.400"/>
<path d="M1112 500C1130 499 1150 498 1161 499C1167 500 1167 513 1163 515C1150 517 1130 518 1122 517C1117 516 1115 510 1113 505" stroke-width="2.400"/>
<path d="M927 510L928 529"/>
<path d="M935 507L945 505M940 500L941 528C938 532 934 528 936 525C940 523 944 525 947 528"/>
<path d="M955 507L964 503M960 497L961 520M958 513C955 517 953 521 958 524C961 525 963 525 963 530"/>
<path d="M971 491L972 494M977 494L978 497" stroke-width="3"/>
<path d="M982 497L997 495M988 488L990 535"/>
</g>
<circle cx="987" cy="513" r="4.500" fill="#f0200e"/><circle cx="959" cy="515" r="4" fill="#f0200e"/>
</svg>

<script>
(function(){
var NS='http://www.w3.org/2000/svg';
var g=-0.1278,h=0.632,a=274,b=400,c=326,d=3.85,e=-39,f=393;
function P(s,t){var w=1+g*s+h*t;return [(a*s+b*t+c)/w,(d*s+e*t+f)/w];}
var G=document.getElementById('grid');
function L(p,q){
 var x0=161,x1=900,y0=24,y1=577,dx=q[0]-p[0],dy=q[1]-p[1],u0=0,u1=1;
 var ps=[-dx,dx,-dy,dy],qs=[p[0]-x0,x1-p[0],p[1]-y0,y1-p[1]];
 for(var i=0;i<4;i++){
  if(ps[i]==0){if(qs[i]<0)return;continue;}
  var r=qs[i]/ps[i];
  if(ps[i]<0){if(r>u1)return;if(r>u0)u0=r;}else{if(r<u0)return;if(r<u1)u1=r;}
 }
 var l=document.createElementNS(NS,'line');
 l.setAttribute('x1',p[0]+u0*dx);l.setAttribute('y1',p[1]+u0*dy);
 l.setAttribute('x2',p[0]+u1*dx);l.setAttribute('y2',p[1]+u1*dy);
 G.appendChild(l);
}
for(var k=-8;k<=8;k++){
 var v=.5+k/2;
 var tn=(0.06-1-g*v)/h; if(tn<-3.5)tn=-3.5;
 L(P(v,tn),P(v,4.5));
 var w0=1+h*v;
 if(w0>0.08){
  var s0=-3.5,s1=4.5;
  var lim=(0.06-1-h*v)/g; if(lim<s1)s1=lim;
  L(P(s0,v),P(s1,v));
 }
}
var T=document.getElementById('ticks');
for(var i=-5;i<=28;i++){
 var x=Math.round(188.3+i*32.17)+.5;
 if(i==0)continue;
 var l=document.createElementNS(NS,'line');
 l.setAttribute('x1',x);l.setAttribute('x2',x);l.setAttribute('y1',604);l.setAttribute('y2',668);
 if(x<190||x>1000)l.setAttribute('stroke','#323232');
 T.appendChild(l);
}
})();
</script>
</div></body></html>
